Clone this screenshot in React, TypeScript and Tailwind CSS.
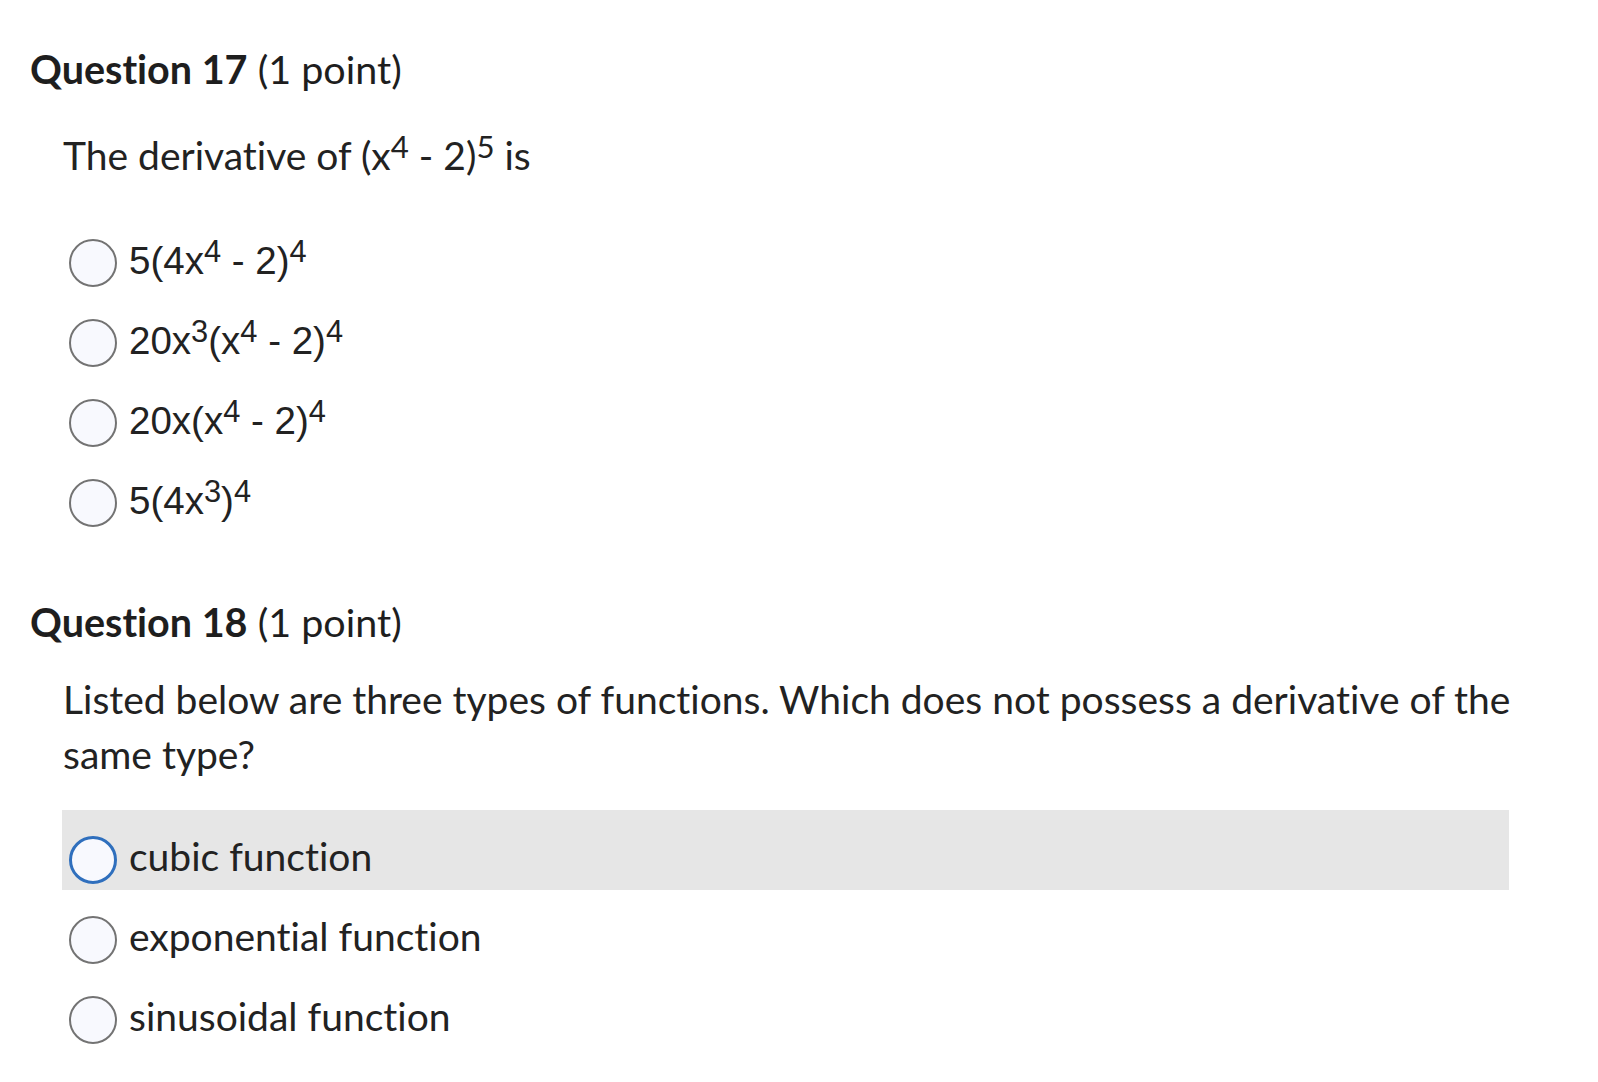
import React from "react";

function Sup({ children }: { children: React.ReactNode }) {
  return (
    <sup className="relative top-[-0.4em] align-baseline text-[0.8em] leading-[0]">
      {children}
    </sup>
  );
}

function Radio({ active }: { active?: boolean }) {
  return (
    <span
      className={
        active
          ? "block w-[48px] h-[48px] shrink-0 rounded-full border-[3px] border-[#2f6fbd] bg-[#f8f9fe]"
          : "block w-[48px] h-[48px] shrink-0 rounded-full border-2 border-[#737373] bg-[#f8f9fe]"
      }
    />
  );
}

function MathOption({ children }: { children: React.ReactNode }) {
  return (
    <div className="flex items-start pt-[26px] pb-[6px] pl-[7px] h-[80px]">
      <Radio />
      <span className="ml-[12px] mt-[-2px] text-[38.5px] leading-[48px] font-['Liberation_Sans',Arial,sans-serif] text-[#222222] whitespace-nowrap">
        {children}
      </span>
    </div>
  );
}

function TextOption({ children, active }: { children: React.ReactNode; active?: boolean }) {
  return (
    <div
      className={
        active
          ? "flex items-start pt-[26px] pb-[6px] pl-[7px] h-[80px] bg-[#e6e6e6]"
          : "flex items-start pt-[26px] pb-[6px] pl-[7px] h-[80px]"
      }
    >
      <Radio active={active} />
      <span className="ml-[12px] mt-[-4px] text-[39px] leading-[48px] text-[#222222] whitespace-nowrap">
        {children}
      </span>
    </div>
  );
}

export default function App() {
  return (
    <div className="w-[1598px] h-[1082px] bg-white font-['Lato','Noto_Sans',sans-serif] [font-variant-ligatures:none] text-[#202020] overflow-hidden">
      <div className="pt-[45px]">
        {/* Question 17 */}
        <h2 className="pl-[30px] text-[39.5px] leading-[1.2] text-[#1e1e1e]">
          <span className="font-bold">Question 17</span>{" "}
          <span className="font-normal">(1 point)</span>
        </h2>
        <p className="pl-[63px] mt-[40px] text-[39px] leading-[1.2] text-[#222222]">
          The derivative of (x<Sup>4</Sup> - 2)<Sup>5</Sup> is
        </p>
        <div className="ml-[62px] mt-[34px]">
          <MathOption>
            5(4x<Sup>4</Sup> - 2)<Sup>4</Sup>
          </MathOption>
          <MathOption>
            20x<Sup>3</Sup>(x<Sup>4</Sup> - 2)<Sup>4</Sup>
          </MathOption>
          <MathOption>
            20x(x<Sup>4</Sup> - 2)<Sup>4</Sup>
          </MathOption>
          <MathOption>
            5(4x<Sup>3</Sup>)<Sup>4</Sup>
          </MathOption>
        </div>

        {/* Question 18 */}
        <h2 className="pl-[30px] mt-[65px] text-[39.5px] leading-[1.2] text-[#1e1e1e]">
          <span className="font-bold">Question 18</span>{" "}
          <span className="font-normal">(1 point)</span>
        </h2>
        <p className="pl-[63px] mt-[26px] text-[39px] leading-[55px] text-[#222222] whitespace-nowrap">
          Listed below are three types of functions. Which does not possess a derivative of the
          <br />
          same type?
        </p>
        <div className="ml-[62px] w-[1447px] mt-[28px]">
          <TextOption active>cubic function</TextOption>
          <TextOption>exponential function</TextOption>
          <TextOption>sinusoidal function</TextOption>
        </div>
      </div>
    </div>
  );
}
